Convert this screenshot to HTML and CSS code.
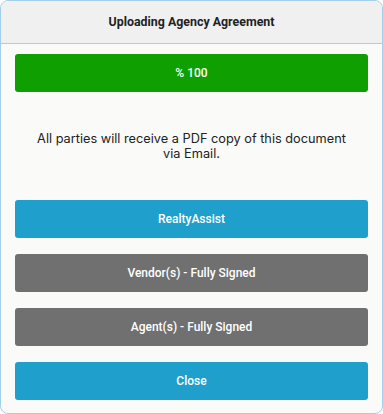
FILE: index.html
```html
<!DOCTYPE html>
<html>
<head>
<meta charset="utf-8">
<link rel="stylesheet" href="styles.css">
</head>
<body>
<div class="modal">
  <div class="modal-header">Uploading Agency Agreement</div>
  <div class="modal-body">
    <div class="btn btn-green">% 100</div>
    <p class="message">All parties will receive a PDF copy of this document via Email.</p>
    <div class="btn btn-blue">RealtyAssist</div>
    <div class="btn btn-gray">Vendor(s) - Fully Signed</div>
    <div class="btn btn-gray">Agent(s) - Fully Signed</div>
    <div class="btn btn-blue">Close</div>
  </div>
</div>
</body>
</html>
```

FILE: styles.css
```css
html, body {
  margin: 0;
  padding: 0;
  background: #ffffff;
}
.modal {
  box-sizing: border-box;
  width: 383px;
  height: 414px;
  border: 1px solid #9fd0ec;
  border-radius: 8px;
  background: #fafbf8;
  overflow: hidden;
  font-family: Roboto, "Liberation Sans", sans-serif;
}
.modal-header {
  height: 42px;
  line-height: 42px;
  background: #f0f0f0;
  border-bottom: 1px solid #c6c6c6;
  text-align: center;
  font-size: 12.4px;
  font-weight: 700;
  color: #222;
}
.modal-body {
  padding: 10px 14px 0;
  display: flex;
  flex-direction: column;
  gap: 16px;
}
.btn {
  height: 38px;
  line-height: 38px;
  border-radius: 3px;
  text-align: center;
  color: #fff;
  font-size: 12px;
  font-weight: 500;
}
.btn-green { background: #109f00; }
.btn-blue { background: #1e9fcc; }
.btn-gray { background: #707070; }
.message {
  margin: 23px 18px 23px;
  text-align: center;
  font-family: Inter, "Open Sans", sans-serif;
  font-size: 12.75px;
  line-height: 15px;
  color: #222;
}
```
